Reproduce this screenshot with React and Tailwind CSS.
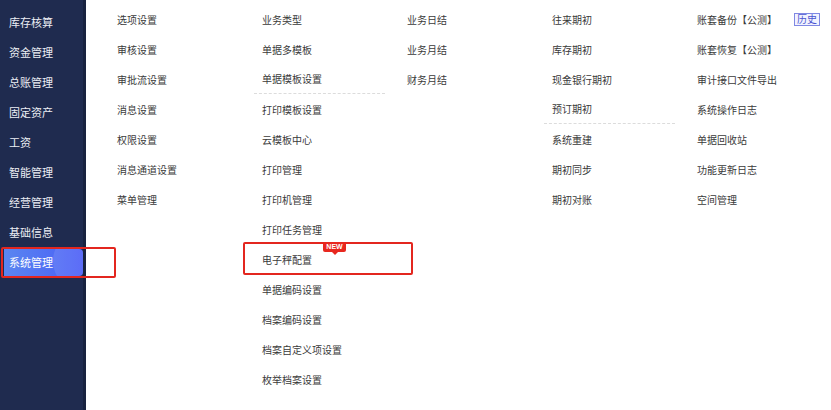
import React from "react";

const side = ["库存核算","资金管理","总账管理","固定资产","工资","智能管理","经营管理","基础信息","系统管理"];

const cols = [
  [{t:"选项设置"},{t:"审核设置"},{t:"审批流设置"},{t:"消息设置"},{t:"权限设置"},{t:"消息通道设置"},{t:"菜单管理"}],
  [{t:"业务类型"},{t:"单据多模板"},{t:"单据模板设置",sep:true},{t:"打印模板设置"},{t:"云模板中心"},{t:"打印管理"},{t:"打印机管理"},{t:"打印任务管理"},{t:"电子秤配置",hot:true},{t:"单据编码设置"},{t:"档案编码设置"},{t:"档案自定义项设置"},{t:"枚举档案设置"}],
  [{t:"业务日结"},{t:"业务月结"},{t:"财务月结"}],
  [{t:"往来期初"},{t:"库存期初"},{t:"现金银行期初"},{t:"预订期初",sep:true},{t:"系统重建"},{t:"期初同步"},{t:"期初对账"}],
  [{t:"账套备份【公测】",hist:true},{t:"账套恢复【公测】"},{t:"审计接口文件导出"},{t:"系统操作日志"},{t:"单据回收站"},{t:"功能更新日志"},{t:"空间管理"}],
];

export default function App() {
  return (
    <div className="flex w-[831px] h-[410px] bg-white overflow-hidden" style={{fontFamily:'"Noto Sans CJK SC","Noto Sans",sans-serif'}}>
      <div className="relative z-10 w-[86px] h-full shrink-0 bg-[#1f2b4f] border-r-[3px] border-[#18223f] pt-[7px]">
        {side.map((s,i)=>{
          const sel = s==="系统管理";
          return (
            <div key={s} className="relative h-[30px] flex items-center">
              {sel ? (
                <>
                  <div className="ml-[4px] w-[79px] h-[27px] rounded-r-[4px] flex items-center pl-[5px] text-[11px] text-white relative overflow-hidden bg-gradient-to-r from-[#5b86f0] to-[#4a5cf6]">
                    <div className="absolute right-[-30px] top-[-18px] w-[60px] h-[60px] rounded-full bg-white/10"></div>
                    <span className="relative">{s}</span>
                  </div>
                  <div className="absolute left-[1px] top-0 w-[115px] h-[31px] border-2 border-[#e3261f] rounded-[2px]"></div>
                </>
              ) : (
                <span className="pl-[9px] text-[11px] text-[#eceef4]">{s}</span>
              )}
            </div>
          );
        })}
      </div>
      <div className="flex gap-[14px] pl-[23px] pt-[4px]">
        {cols.map((c,ci)=>(
          <div key={ci} className="w-[131px] flex flex-col">
            {c.map(it=>(
              <div key={it.t} className={"relative h-[30px] flex items-center justify-between pl-2 text-[10px] text-[#3a3a3a] " + (it.sep ? "border-b border-dashed border-[#dcdcdc]" : "")}>
                <span>{it.t}</span>
                {it.hist && (
                  <span className="h-[13px] px-[2px] flex items-center border border-[#7f88e3] bg-[#f1f2ff] text-[#4a55d0] text-[10px] leading-none">历史</span>
                )}
                {it.hot && (
                  <>
                    <div className="absolute left-[-11px] top-[-2px] w-[170px] h-[33px] border-2 border-[#e3261f] rounded-[2px]"></div>
                    <div className="absolute left-[69px] top-[-2px] w-[23px] h-[10px] bg-[#e8281f] rounded-[2px] text-white text-[7px] font-bold leading-[10px] text-center" style={{fontFamily:'"Liberation Sans",sans-serif'}}>NEW</div>
                    <div className="absolute left-[78px] top-[8px] w-0 h-0 border-l-[3px] border-r-[3px] border-t-[3px] border-l-transparent border-r-transparent border-t-[#e8281f]"></div>
                  </>
                )}
              </div>
            ))}
          </div>
        ))}
      </div>
    </div>
  );
}
